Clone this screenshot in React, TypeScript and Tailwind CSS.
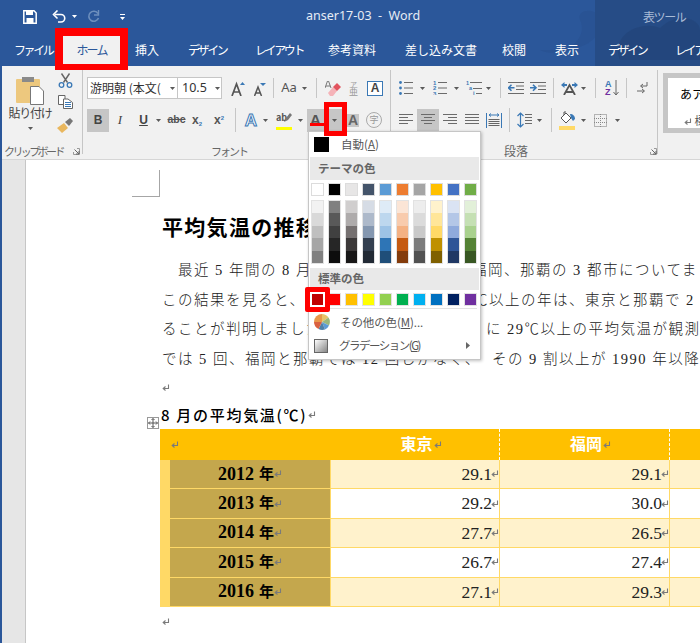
import React from "react";

const Arrow = ({ className = "" }: { className?: string }) => (
  <svg width="5" height="3" viewBox="0 0 5 3" className={"shrink-0 " + className}><path d="M0 0h5L2.5 3z" fill="#5a5a5a" /></svg>
);

const Ret = ({ className = "" }: { className?: string }) => (
  <svg width="8" height="8" viewBox="0 0 8 8" className={"inline-block shrink-0 " + className}>
    <path d="M6.5 0.5V4.5H1.5M3.5 2.5L1.2 4.5L3.5 6.5" stroke="#7a7a7a" strokeWidth="1.1" fill="none" />
  </svg>
);

const Lines = ({ w, rows, pitch = 3 }: { w: number; rows: [number, number][]; pitch?: number }) => (
  <svg width={w} height={rows.length * pitch} viewBox={`0 0 ${w} ${rows.length * pitch}`} className="shrink-0">
    {rows.map(([a, b], i) => (
      <rect key={i} x={a} y={i * pitch} width={b - a} height="1" fill="#6b6b6b" />
    ))}
  </svg>
);

const Launcher = ({ className = "" }: { className?: string }) => (
  <svg width="7" height="7" viewBox="0 0 7 7" className={"shrink-0 " + className}>
    <path d="M0.5 3V0.5H6.5V6.5H4" stroke="#999" fill="none" transform="rotate(90 3.5 3.5) scale(1 1)" />
    <path d="M1.5 1.5L6 6M6 3V6H3" stroke="#666" fill="none" />
  </svg>
);

const tints = [
  ["#ffffff", "#f2f2f2", "#d9d9d9", "#bfbfbf", "#a6a6a6", "#808080"],
  ["#000000", "#808080", "#595959", "#404040", "#262626", "#0d0d0d"],
  ["#e7e6e6", "#d0cece", "#aeabab", "#757070", "#3b3838", "#181717"],
  ["#44546a", "#d6dce5", "#adb9ca", "#8497b0", "#333f50", "#222a35"],
  ["#5b9bd5", "#deebf7", "#bdd7ee", "#9dc3e6", "#2e75b6", "#1f4e79"],
  ["#ed7d31", "#fbe5d6", "#f8cbad", "#f4b183", "#c55a11", "#843c0c"],
  ["#a5a5a5", "#ededed", "#dbdbdb", "#c9c9c9", "#7c7c7c", "#525252"],
  ["#ffc000", "#fff2cc", "#ffe699", "#ffd966", "#bf9000", "#7f6000"],
  ["#4472c4", "#dae3f3", "#b4c7e7", "#8faadc", "#2f5597", "#203864"],
  ["#70ad47", "#e2f0d9", "#c5e0b4", "#a9d18e", "#548235", "#385723"],
];
const standard = ["#c00000", "#ff0000", "#ffc000", "#ffff00", "#92d050", "#00b050", "#00b0f0", "#0070c0", "#002060", "#7030a0"];

const rows = [
  ["2012", "29.1", "29.1"],
  ["2013", "29.2", "30.0"],
  ["2014", "27.7", "26.5"],
  ["2015", "26.7", "27.4"],
  ["2016", "27.1", "29.3"],
];

const SEP = "w-px bg-[#c6c6c6] shrink-0";
const SLOT = "flex items-center justify-center shrink-0";
const LATIN = "font-['Liberation_Sans',sans-serif]";
const TAB = "text-[12px] text-white whitespace-nowrap shrink-0";

function ColorMenu() {
  return (
    <div className="absolute left-[308px] top-[131px] w-[173px] h-[229px] bg-white border border-[#c6c6c6] shadow-[1px_1px_3px_rgba(0,0,0,0.25)] z-20 text-[11.5px] text-[#555]">
      <div className="flex items-center h-[25px] pl-[5px]">
        <div className="w-[15px] h-[15px] bg-black" />
        <span className="ml-[12px] whitespace-nowrap">自動(<u>A</u>)</span>
      </div>
      <div className="h-[23px] bg-[#e9e9e9] flex items-center pl-[8px] font-bold text-[#666] mx-px">テーマの色</div>
      <div className="flex gap-[4px] pl-[2px] mt-[3px]">
        {tints.map((c) => (
          <div key={c[0]} className="w-[13px] h-[13px] border border-[#dcdcdc]" style={{ background: c[0] }} />
        ))}
      </div>
      <div className="flex gap-[4px] pl-[2px] mt-[4px]">
        {tints.map((c) => (
          <div key={c[0]} className="w-[13px] border border-[#e2e2e2] flex flex-col">
            {c.slice(1).map((t) => (
              <div key={t} className="h-[12.4px]" style={{ background: t }} />
            ))}
          </div>
        ))}
      </div>
      <div className="h-[22px] bg-[#e9e9e9] flex items-center pl-[8px] font-bold text-[#666] mt-[4px] mx-px">標準の色</div>
      <div className="flex gap-[4px] pl-[2px] mt-[3px]">
        {standard.map((c, i) => (
          <div key={c} className={"w-[13px] h-[13px] border " + (i === 0 ? "border-white" : "border-[#e2e2e2]")} style={{ background: c }} />
        ))}
      </div>
      <div className="h-px bg-[#e2e2e2] mx-[3px] mt-[2px]" />
      <div className="flex items-center h-[25px] pl-[4px] mt-px">
        <svg width="18" height="18" viewBox="0 0 18 18">
          <path d="M9 9L9 1A8 8 0 0 1 15.5 4.5z" fill="#e8c36b" />
          <path d="M9 9L15.5 4.5A8 8 0 0 1 16 12.5z" fill="#9ab77d" />
          <path d="M9 9L16 12.5A8 8 0 0 1 12 16.5z" fill="#5b9bd5" />
          <path d="M9 9L12 16.5A8 8 0 0 1 5.5 16z" fill="#4f81a8" />
          <path d="M9 9L5.5 16A8 8 0 0 1 1 9z" fill="#d9603f" />
          <path d="M9 9L1 9A8 8 0 0 1 9 1z" fill="#e8974a" />
        </svg>
        <span className="ml-[9px] whitespace-nowrap tracking-[-0.1px]">その他の色(<u>M</u>)...</span>
      </div>
      <div className="flex items-center h-[22px] pl-[5px]">
        <div className="w-[14px] h-[14px] border border-[#666] bg-gradient-to-br from-white to-[#888]" />
        <span className="ml-[11px] whitespace-nowrap tracking-[-1.5px]">グラデーション(<u>G</u>)</span>
        <svg width="4" height="7" viewBox="0 0 4 7" className="ml-auto mr-[10px]"><path d="M0 0L4 3.5L0 7z" fill="#666" /></svg>
      </div>
    </div>
  );
}

function Ribbon() {
  return (
    <div className="h-[94px] bg-[#f1f1f1] flex border-b border-[#d6d6d6] text-[#444] overflow-hidden">
      {/* Clipboard */}
      <div className="w-[83px] h-[84px] mt-[4px] shrink-0 border-r border-[#c6c6c6] flex flex-col">
        <div className="flex h-[66px] shrink-0">
          <div className="w-[57px] shrink-0 flex flex-col items-center pt-[7px] pl-[3px]">
            <svg width="28" height="28" viewBox="0 0 28 28" className="shrink-0">
              <rect x="0" y="2" width="24" height="24" rx="1" fill="#edc87e" />
              <rect x="6" y="0" width="12" height="5" fill="#8a8a8a" />
              <path d="M14.5 9.5H23L27.5 14V27.5H14.5z" fill="#fff" stroke="#777" />
            </svg>
            <span className="text-[12px] tracking-[-1.2px] whitespace-nowrap mt-[-1px] leading-[17px]">貼り付け</span>
            <Arrow className="mt-[6px]" />
          </div>
          <div className="flex flex-col items-center pt-[3px] gap-[7px]">
            <svg width="15" height="15" viewBox="0 0 15 15" className="shrink-0">
              <path d="M3.5 0.5L9.5 9.5M11.5 0.5L5.5 9.5" stroke="#666" strokeWidth="1.4" />
              <circle cx="3.5" cy="12" r="2.3" fill="none" stroke="#3a78b5" strokeWidth="1.3" />
              <circle cx="11.5" cy="12" r="2.3" fill="none" stroke="#3a78b5" strokeWidth="1.3" />
            </svg>
            <svg width="15" height="14" viewBox="0 0 15 14" className="shrink-0">
              <path d="M0.5 0.5H7V9.5H0.5z" fill="#fff" stroke="#666" />
              <path d="M5.5 4H10L14.5 7.5V13.5H5.5z" fill="#fff" stroke="#666" />
              <path d="M7 7.5H13M7 9.5H13M7 11.5H13" stroke="#3a78b5" />
            </svg>
            <svg width="16" height="15" viewBox="0 0 16 15" className="shrink-0 mt-[2px]">
              <path d="M0 10L7 5L11 10L5 15z" fill="#e9b75e" />
              <path d="M8 4L13 0L16 3L12 8z" fill="#777" />
            </svg>
          </div>
        </div>
        <div className="h-[16px] mt-[7px] shrink-0 flex items-center pl-[4px] text-[11px] tracking-[-2.6px] text-[#666] whitespace-nowrap">
          クリップボード
          <Launcher className="ml-[10px]" />
        </div>
      </div>

      {/* Font */}
      <div className="w-[308px] h-[84px] mt-[4px] shrink-0 border-r border-[#c6c6c6] flex flex-col pl-[4px]">
        <div className="flex items-center h-[24px] mt-[6px] shrink-0">
          <div className="w-[91px] h-[22px] bg-white border border-[#c6c6c6] flex items-center pl-[2px] text-[12px] text-[#333] whitespace-nowrap shrink-0">
            <span className="w-[75px] overflow-hidden">游明朝 (本文(</span><Arrow className="ml-[5px]" />
          </div>
          <div className={"w-[44px] h-[22px] bg-white border border-[#c6c6c6] border-l-0 flex items-center pl-[4px] text-[12.5px] text-[#333] shrink-0 font-['Noto_Sans',sans-serif]"}>
            10.5<Arrow className="ml-[8px]" />
          </div>
          <svg width="14" height="15" viewBox="0 0 14 15" className="ml-[9px] shrink-0"><path d="M1 15L5.5 3L10 15M2.5 11H8.5" stroke="#555" strokeWidth="1.7" fill="none" /><path d="M9 4L11.5 1L14 4z" fill="#3a78b5" /></svg>
          <svg width="12" height="13" viewBox="0 0 12 13" className="ml-[9px] mt-[2px] shrink-0"><path d="M0.5 13L4 4L7.5 13M1.8 10H6.2" stroke="#555" strokeWidth="1.5" fill="none" /><path d="M6 0H12L9 3z" fill="#3a78b5" /></svg>
          <div className={SEP + " h-[20px] ml-[7px]"} />
          <span className={SLOT + " ml-[7px] w-[16px] text-[13px] text-[#555] font-['Noto_Sans',sans-serif]"}>Aa</span>
          <Arrow className="ml-[5px]" />
          <div className={SEP + " h-[20px] ml-[9px]"} />
          <svg width="16" height="15" viewBox="0 0 16 15" className="ml-[8px] shrink-0">
            <path d="M3 12L8 6L12 10L8 15H5z" fill="#f5b3b8" /><path d="M8 6L12 2L16 6L12 10z" fill="#e2545f" /><path d="M0 7L2.5 0H3.5L6 7M1 5H5" stroke="#777" fill="none" />
          </svg>
          <div className="ml-[8px] w-[9px] shrink-0 flex flex-col items-center leading-[7px] text-[#999]">
            <span className="text-[7px]">ア</span>
            <span className="text-[9px]">亜</span>
          </div>
          <div className={SLOT + " ml-[9px] w-[16px] h-[15px] border border-[#3a78b5] bg-white text-[12px] font-bold text-[#444] " + LATIN}>A</div>
        </div>
        <div className="flex items-center h-[24px] mt-[8px] shrink-0">
          <div className={SLOT + " w-[22px] h-[23px] bg-[#c6c6c6] text-[12px] font-bold text-[#444] " + LATIN}>B</div>
          <span className={SLOT + " ml-[6px] w-[10px] text-[13px] italic text-[#444] font-['Liberation_Serif',serif]"}>I</span>
          <span className={SLOT + " ml-[12px] w-[13px] text-[12px] font-bold underline text-[#444] " + LATIN}>U</span>
          <Arrow className="ml-[6px]" />
          <span className={SLOT + " ml-[7px] w-[17px] text-[10.5px] font-bold line-through text-[#555] " + LATIN}>abc</span>
          <span className={"flex items-baseline shrink-0 ml-[7px] w-[13px] text-[12px] font-bold text-[#555] " + LATIN}>x<span className="text-[6px] text-[#3a78b5] translate-y-[2px]">2</span></span>
          <span className={"flex items-baseline shrink-0 ml-[9px] w-[12px] text-[12px] font-bold text-[#555] " + LATIN}>x<span className="text-[6px] text-[#3a78b5] -translate-y-[4px]">2</span></span>
          <div className={SEP + " h-[24px] ml-[9px]"} />
          <span className={SLOT + " ml-[8px] w-[14px] text-[17px] leading-none font-bold text-white [-webkit-text-stroke:1px_#3a78b5] " + LATIN}>A</span>
          <Arrow className="ml-[5px]" />
          <div className="ml-[8px] w-[16px] h-[19px] shrink-0 flex flex-col justify-between relative">
            <span className="text-[9px] leading-[13px] text-[#555] font-bold">ab</span>
            <svg width="8" height="10" viewBox="0 0 8 10" className="absolute right-0 top-[2px]"><path d="M0 9L2 5L6 0L8 2L4 7z" fill="#777" /></svg>
            <div className="w-[16px] h-[3px] bg-[#ffff00]" />
          </div>
          <Arrow className="ml-[6px]" />
          <div className="ml-[4px] w-[35px] h-[23px] bg-[#c6c6c6] flex items-center shrink-0">
            <span className={SLOT + " w-[17px] text-[15px] font-semibold text-[#555] " + LATIN}>A</span>
            <Arrow className="ml-[8px]" />
          </div>
          <div className={SLOT + " ml-[5px] w-[12px] h-[13px] bg-[#c6c6c6] text-[14px] font-semibold text-[#666] " + LATIN}>A</div>
          <div className={SLOT + " ml-[7px] w-[16px] h-[16px] rounded-full border border-[#aaa] text-[9px] text-[#999]"}>字</div>
        </div>
        <div className="text-center text-[11px] tracking-[-2px] text-[#666] mt-[12px] h-[14px] leading-[14px] pr-[19px] shrink-0">フォント</div>
      </div>

      {/* Paragraph */}
      <div className="w-[267px] h-[84px] mt-[4px] shrink-0 border-r border-[#c6c6c6] flex flex-col pl-[8px]">
        <div className="flex items-center h-[24px] mt-[6px] shrink-0">
          <svg width="14" height="14" viewBox="0 0 14 14" className="shrink-0">
            {[1.5, 7, 12.5].map((y) => (<g key={y}><circle cx="1.5" cy={y} r="1.4" fill="#3a78b5" /><rect x="5" y={y - 0.5} width="9" height="1" fill="#6b6b6b" /></g>))}
          </svg>
          <Arrow className="ml-[7px]" />
          <svg width="14" height="14" viewBox="0 0 14 14" className="ml-[8px] shrink-0">
            {[1.5, 7, 12.5].map((y, i) => (<g key={y}><text x="0" y={y + 2.2} fontSize="6" fontWeight="bold" fill="#3a78b5" fontFamily="Liberation Sans">{i + 1}</text><rect x="5" y={y - 0.5} width="9" height="1" fill="#6b6b6b" /></g>))}
          </svg>
          <Arrow className="ml-[7px]" />
          <svg width="16" height="14" viewBox="0 0 16 14" className="ml-[7px] shrink-0">
            <text x="0" y="4" fontSize="5.5" fontWeight="bold" fill="#3a78b5" fontFamily="Liberation Sans">1</text>
            <rect x="4" y="1" width="12" height="1" fill="#6b6b6b" />
            <text x="3" y="9" fontSize="5.5" fontWeight="bold" fill="#3a78b5" fontFamily="Liberation Sans">a</text>
            <rect x="7" y="7" width="9" height="1" fill="#6b6b6b" />
            <text x="7" y="14" fontSize="5.5" fontWeight="bold" fill="#3a78b5" fontFamily="Liberation Sans">i</text>
            <rect x="10" y="12" width="6" height="1" fill="#6b6b6b" />
          </svg>
          <Arrow className="ml-[4px]" />
          <div className={SEP + " h-[20px] ml-[9px]"} />
          <svg width="16" height="12" viewBox="0 0 16 12" className="ml-[7px] shrink-0">
            <path d="M0 0.5H16M8 4H16M8 7.5H16M0 11.5H16" stroke="#6b6b6b" /><path d="M0.5 5.8H6.5M3.5 2.8L0.5 5.8L3.5 8.8" stroke="#3a78b5" strokeWidth="1.6" fill="none" />
          </svg>
          <svg width="16" height="12" viewBox="0 0 16 12" className="ml-[6px] shrink-0">
            <path d="M0 0.5H16M8 4H16M8 7.5H16M0 11.5H16" stroke="#6b6b6b" /><path d="M0 5.8H6M3 2.8L6 5.8L3 8.8" stroke="#3a78b5" strokeWidth="1.6" fill="none" />
          </svg>
          <div className={SEP + " h-[20px] ml-[7px]"} />
          <svg width="17" height="13" viewBox="0 0 17 13" className="ml-[7px] shrink-0">
            <path d="M3 13L8.5 3L14 13M5 10H12" stroke="#555" strokeWidth="1.8" fill="none" />
            <path d="M0 3L3.5 0V2H6V4H3.5V6zM17 3L13.5 0V2H11V4H13.5V6z" fill="#3a78b5" />
          </svg>
          <Arrow className="ml-[3px]" />
          <div className={SEP + " h-[20px] ml-[9px]"} />
          <div className="ml-[9px] w-[14px] shrink-0 flex items-center">
            <div className={"w-[8px] flex flex-col text-[9px] font-bold leading-[8px] text-[#3a78b5] " + LATIN}><span>A</span><span className="text-[#7030a0]">Z</span></div>
            <svg width="6" height="16" viewBox="0 0 6 16"><path d="M3 0V15M0.5 12L3 15L5.5 12" stroke="#666" fill="none" /></svg>
          </div>
          <div className={SEP + " h-[20px] ml-[7px]"} />
          <svg width="11" height="12" viewBox="0 0 11 12" className="ml-[10px] shrink-0"><path d="M10 0V4H4M6 2L3.5 4L6 6M0 9H7M5 7L7.5 9L5 11" stroke="#666" fill="none" /></svg>
        </div>
        <div className="flex items-center h-[24px] mt-[8px] shrink-0">
          <Lines w={14} rows={[[0, 14], [0, 9], [0, 14], [0, 9]]} />
          <div className={SLOT + " ml-[4px] w-[22px] h-[23px] bg-[#c6c6c6]"}><Lines w={14} rows={[[0, 14], [3, 11], [0, 14], [3, 11]]} /></div>
          <div className="ml-[4px] shrink-0"><Lines w={14} rows={[[0, 14], [5, 14], [0, 14], [5, 14]]} /></div>
          <div className="ml-[8px] shrink-0"><Lines w={14} rows={[[0, 14], [0, 14], [0, 14], [0, 14]]} /></div>
          <svg width="16" height="15" viewBox="0 0 16 15" className="ml-[7px] shrink-0"><path d="M0.5 0V15M15.5 0V15" stroke="#3a78b5" /><path d="M3 2H13M5 0.5L3 2L5 3.5M11 0.5L13 2L11 3.5" stroke="#3a78b5" fill="none" /><path d="M2.5 6.5H13.5M2.5 8.5H13.5M2.5 10.5H13.5M2.5 12.5H13.5" stroke="#666" /></svg>
          <div className={SEP + " h-[24px] ml-[7px]"} />
          <svg width="7" height="16" viewBox="0 0 7 16" className="ml-[7px] shrink-0"><path d="M3.5 1V15M0.5 4L3.5 1L6.5 4M0.5 12L3.5 15L6.5 12" stroke="#3a78b5" strokeWidth="1.2" fill="none" /></svg>
          <div className="ml-px shrink-0"><Lines w={7} rows={[[0, 7], [0, 7], [0, 7], [0, 7]]} /></div>
          <Arrow className="ml-[5px]" />
          <div className={SEP + " h-[24px] ml-[9px]"} />
          <div className="ml-[7px] w-[16px] h-[19px] shrink-0 flex flex-col justify-between items-center">
            <svg width="15" height="13" viewBox="0 0 15 13"><path d="M1 7L6 2L11 7L6 12z" fill="#fff" stroke="#555" /><path d="M4 4V1H6" stroke="#555" fill="none" /><path d="M10 3C13 3 15 5 15 8L13 10L11 7z" fill="#3a78b5" /></svg>
            <div className="w-[16px] h-[4px] bg-[#ffd966] shrink-0" />
          </div>
          <Arrow className="ml-[6px]" />
          <svg width="13" height="13" viewBox="0 0 13 13" className="ml-[8px] shrink-0"><rect x="0.5" y="0.5" width="12" height="12" fill="none" stroke="#777" strokeDasharray="1 1" /><path d="M6.5 0V13M0 4.5H13M0 8.5H13" stroke="#888" strokeDasharray="1 1" /></svg>
          <Arrow className="ml-[8px]" />
        </div>
        <div className="flex items-center mt-[12px] h-[14px] leading-[14px] text-[12px] text-[#666] shrink-0">
          <span className="ml-[105px]">段落</span>
          <Launcher className="ml-[122px]" />
        </div>
      </div>

      {/* Styles */}
      <div className="pl-[5px] pt-[7px]">
        <div className="w-[60px] h-[60px] border-[5px] border-r-0 border-[#c6c6c6] bg-white pl-[12px] pt-[5px] text-[12px] text-black overflow-hidden whitespace-nowrap">
          <div className="h-[30px] leading-[22px]">あア</div>
          <div className="text-[11px] text-[#555] leading-[14px] pl-[4px]"><Ret /> 標準</div>
        </div>
      </div>
    </div>
  );
}

export default function App() {
  return (
    <div className="relative w-[700px] h-[643px] overflow-hidden bg-white font-['Noto_Sans_CJK_JP','Noto_Sans',sans-serif]">
      {/* Title bar */}
      <div className="h-[66px] bg-[#2b579a] relative">
        <svg width="170" height="66" viewBox="0 0 170 66" className="absolute left-[530px] top-0">
          <path d="M10 50C30 60 60 40 50 20C45 5 80 8 70 30C60 50 40 50 10 50z" fill="#274f8d" opacity="0.5" />
        </svg>
        <div className="absolute left-[595px] top-0 w-[105px] h-[66px] bg-[#264c86]">
          <svg width="105" height="66" viewBox="0 0 105 66" className="absolute left-0 top-0">
            <path d="M25 60C15 35 45 20 65 28C85 10 105 20 105 30V60z" fill="#224579" opacity="0.7" />
          </svg>
          <span className="absolute left-[48px] top-[8px] text-[12px] text-[#a9bbd6] tracking-[-1.4px] whitespace-nowrap">表ツール</span>
        </div>
        <div className="flex items-center h-[33px] relative">
          <svg width="14" height="14" viewBox="0 0 14 14" className="ml-[23px] shrink-0">
            <path d="M0.8 0.8H11L13.2 3V13.2H0.8z" fill="none" stroke="#fff" strokeWidth="1.5" /><rect x="3" y="1" width="7" height="4" fill="#fff" /><rect x="3.5" y="8" width="7" height="5" fill="#fff" />
          </svg>
          <svg width="14" height="13" viewBox="0 0 14 13" className="ml-[15px] shrink-0"><path d="M3 4.5H9A3.7 3.7 0 0 1 9 12H6" stroke="#fff" strokeWidth="1.6" fill="none" /><path d="M5.5 0.5L1.5 4.5L5.5 8.5" stroke="#fff" strokeWidth="1.6" fill="none" /></svg>
          <svg width="5" height="3" viewBox="0 0 5 3" className="ml-[6px] shrink-0"><path d="M0 0H5L2.5 3z" fill="#fff" /></svg>
          <svg width="13" height="13" viewBox="0 0 13 13" className="ml-[10px] shrink-0"><path d="M11 3.5A5 5 0 1 0 11.5 8" stroke="#6d8fbd" strokeWidth="1.6" fill="none" /><path d="M11.5 0V5H7" stroke="#6d8fbd" strokeWidth="1.4" fill="none" /></svg>
          <svg width="5" height="6" viewBox="0 0 5 6" className="ml-[20px] shrink-0"><path d="M0 0H5V1H0zM0 3H5L2.5 6z" fill="#fff" /></svg>
          <div className="ml-[181px] text-[12.5px] text-[#e6ecf5] whitespace-nowrap font-['Noto_Sans',sans-serif]">anser17-03&nbsp;&nbsp;-&nbsp;&nbsp;Word</div>
        </div>
        <div className="flex items-center h-[33px] relative whitespace-nowrap">
          <div className={TAB + " ml-[14px] w-[41px] tracking-[-2.4px]"}>ファイル</div>
          <div className="w-[57px] ml-[8px] h-[33px] bg-[#f1f1f1] text-[12px] text-[#2b579a] flex items-center justify-center tracking-[-1.8px] shrink-0">ホーム</div>
          <div className={TAB + " ml-[15px] w-[39px]"}>挿入</div>
          <div className={TAB + " ml-[14px] w-[53px] tracking-[-2.4px]"}>デザイン</div>
          <div className={TAB + " ml-[14px] w-[59px] tracking-[-2.4px]"}>レイアウト</div>
          <div className={TAB + " ml-[14px] w-[63px]"}>参考資料</div>
          <div className={TAB + " ml-[14px] w-[83px]"}>差し込み文書</div>
          <div className={TAB + " ml-[14px] w-[39px]"}>校閲</div>
          <div className={TAB + " ml-[14px] w-[39px]"}>表示</div>
          <div className={TAB + " ml-[14px] w-[53px] tracking-[-2.4px]"}>デザイン</div>
          <div className={TAB + " ml-[14px] w-[59px] tracking-[-2.4px]"}>レイアウト</div>
        </div>
      </div>

      <Ribbon />

      {/* Document */}
      <div className="flex h-[483px]">
        <div className="w-[26px] bg-[#e6e6e6] border-r border-[#c6c6c6] shrink-0" />
        <div className="flex-1 min-w-0 overflow-hidden relative pt-[10px]">
          <div className="w-[28px] h-[27px] ml-[106px] border-r border-b border-[#a6a6a6]" />
          <div className="ml-[136px]">
            <div className="mt-[15px] text-[21px] font-bold text-black leading-[28px] tracking-[1.3px] whitespace-nowrap">平均気温の推移</div>
            <div className="mt-[16px] text-[14.5px] leading-[29.5px] tracking-[1.5px] text-[#222] whitespace-nowrap font-['Liberation_Serif','Noto_Sans_CJK_JP',serif] font-light">
              <div className="flex"><span className="w-[310px] pl-[16px] overflow-hidden shrink-0">最近 5 年間の 8 月の平均気温を東京、</span><span>福岡、那覇の 3 都市についてま</span></div>
              <div className="flex"><span className="w-[311px] overflow-hidden shrink-0">この結果を見ると、平均気温が 29</span><span>℃以上の年は、東京と那覇で 2</span></div>
              <div className="flex"><span className="w-[324px] overflow-hidden shrink-0">ることが判明しました。過去 5 年間</span><span>に 29℃以上の平均気温が観測</span></div>
              <div className="flex"><span className="w-[330px] overflow-hidden shrink-0">では 5 回、福岡と那覇では 12 回しかなく、</span><span>その 9 割以上が 1990 年以降</span></div>
            </div>
            <div className="mt-[6px] h-[16px] flex items-center"><Ret /></div>
          </div>
          <div className="ml-[135px] mt-[9px] h-[20px] flex items-center text-[15px] tracking-[1.7px] font-medium text-black whitespace-nowrap">8 月の平均気温(℃)<Ret className="ml-[1px]" /></div>
          <div className="absolute left-[121px] top-[257px] w-[12px] h-[12px] border border-[#999] bg-white flex items-center justify-center">
            <svg width="10" height="10" viewBox="0 0 10 10"><path d="M5 0.5V9.5M0.5 5H9.5" stroke="#555" /><path d="M3.5 2L5 0.5L6.5 2M3.5 8L5 9.5L6.5 8M2 3.5L0.5 5L2 6.5M8 3.5L9.5 5L8 6.5" stroke="#555" fill="none" /></svg>
          </div>
          {/* Table */}
          <div className="ml-[134px] mt-[4px] w-[710px] grid grid-cols-[171px_169px_170px_200px] font-['Liberation_Serif','Noto_Sans_CJK_JP',serif]">
            <div className="h-[31px] bg-[#ffc000] pl-[11px] flex items-center"><Ret /></div>
            <div className="h-[31px] bg-[#ffc000] border-r border-dashed border-white flex items-center justify-center pl-[12px] text-white font-bold text-[16px]">東京<Ret className="ml-px" /></div>
            <div className="h-[31px] bg-[#ffc000] border-r border-dashed border-white flex items-center justify-center pl-[12px] text-white font-bold text-[16px]">福岡<Ret className="ml-px" /></div>
            <div className="h-[31px] bg-[#ffc000] flex items-center justify-center text-white font-bold text-[16px]">那覇</div>
            {rows.map((r, i) => {
              const bg = i % 2 === 0 ? "bg-[#fff2cc]" : "bg-white";
              return (
                <React.Fragment key={r[0]}>
                  <div className="h-[29.4px] border-b border-r border-b-[#ffd966] border-r-[#ffd966] bg-[#c4a74d] border-l-[10px] border-l-[#ffd966] flex items-center justify-center font-bold text-[18px] text-black whitespace-nowrap">
                    {r[0]}<span className="ml-[5px] text-[15px]">年</span><Ret />
                  </div>
                  <div className={"h-[29.4px] border-b border-r border-[#ffd966] flex items-center justify-end text-[17.5px] text-[#222] " + bg}>{r[1]}<Ret className="-ml-px" /></div>
                  <div className={"h-[29.4px] border-b border-r border-[#ffd966] flex items-center justify-end text-[17.5px] text-[#222] " + bg}>{r[2]}<Ret className="-ml-px" /></div>
                  <div className={"h-[29.4px] border-b border-[#ffd966] " + bg} />
                </React.Fragment>
              );
            })}
          </div>
          <div className="ml-[136px] mt-[9px] h-[12px] flex items-center"><Ret /></div>
        </div>
      </div>

      <ColorMenu />

      {/* Overlays */}
      <div className="absolute left-0 top-0 w-[2px] h-[643px] bg-[#2b579a] z-10" />
      <div className="absolute left-[55px] top-[28px] w-[73px] h-[42px] border-[8px] border-b-[6px] border-[#ff0000] z-30" />
      <div className="absolute left-[324px] top-[102px] w-[23px] h-[34px] border-[5px] border-[#ff0000] z-30" />
      <div className="absolute left-[310px] top-[123px] w-[15px] h-[3px] bg-[#ff0000] z-30" />
      <div className="absolute left-[305px] top-[287px] w-[25px] h-[25px] border-[5px] border-[#ff0000] rounded-[2px] z-30" />
    </div>
  );
}
